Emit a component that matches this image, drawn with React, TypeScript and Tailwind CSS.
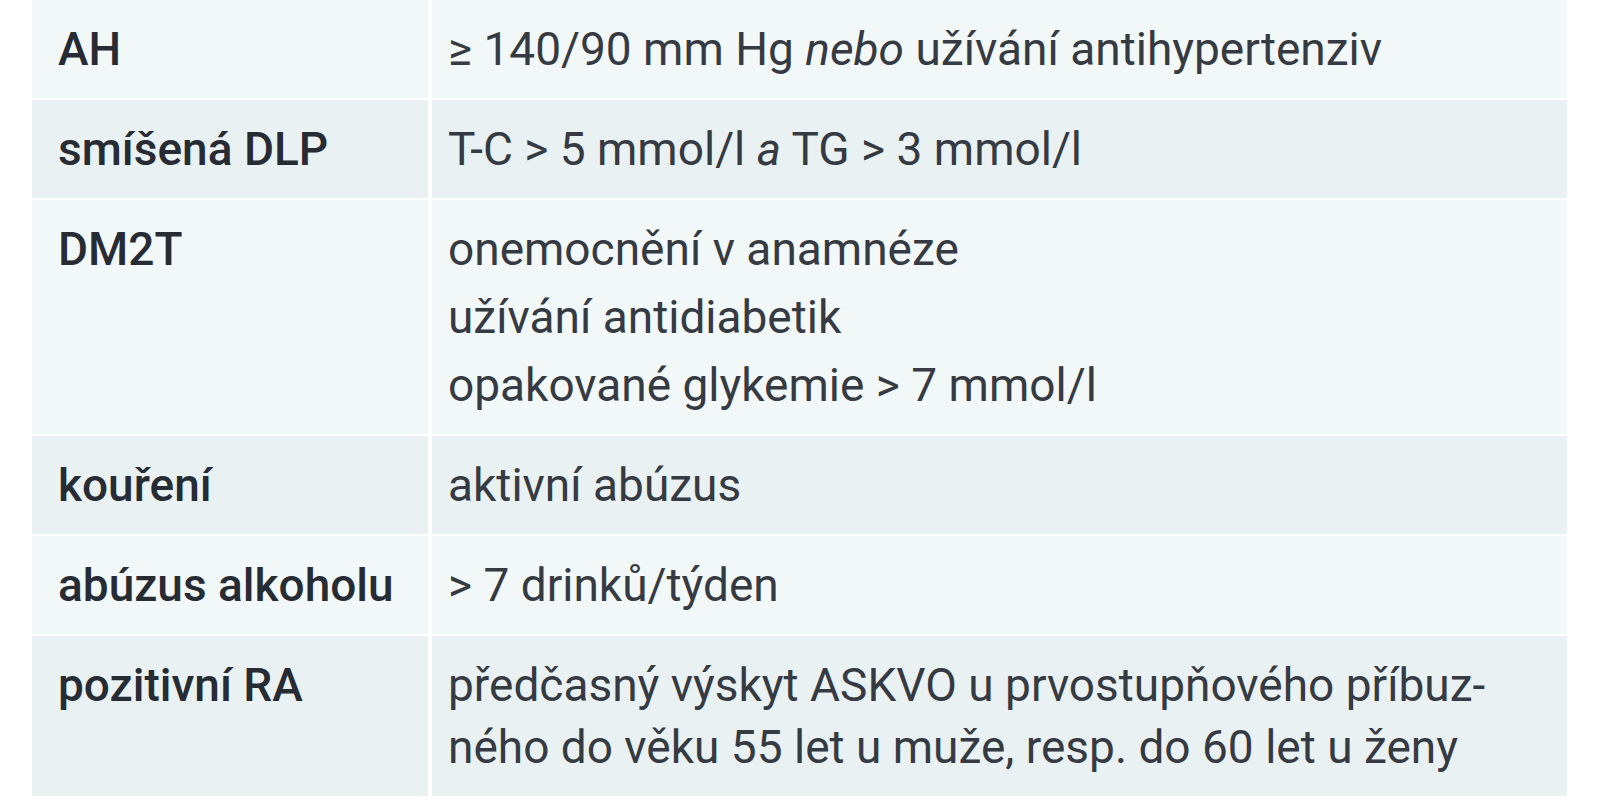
import React from "react";

type Row = {
  label: string;
  lines: React.ReactNode[];
  tight?: boolean;
};

const rows: Row[] = [
  {
    label: "AH",
    lines: [
      <>
        ≥ 140/90 mm Hg <i>nebo</i> užívání antihypertenziv
      </>,
    ],
  },
  {
    label: "smíšená DLP",
    lines: [
      <>
        T-C &gt; 5 mmol/l <i>a</i> TG &gt; 3 mmol/l
      </>,
    ],
  },
  {
    label: "DM2T",
    lines: ["onemocnění v anamnéze", "užívání antidiabetik", "opakované glykemie > 7 mmol/l"],
  },
  { label: "kouření", lines: ["aktivní abúzus"] },
  { label: "abúzus alkoholu", lines: ["> 7 drinků/týden"] },
  {
    label: "pozitivní RA",
    tight: true,
    lines: [
      "předčasný výskyt ASKVO u prvostupňového příbuz-",
      "ného do věku 55 let u muže, resp. do 60 let u ženy",
    ],
  },
];

const App = () => {
  return (
    <div className="min-h-[800px] w-full bg-white pl-8 pr-9 font-['Roboto','Liberation_Sans',sans-serif] text-[46px] text-[#363a42]">
      <div className="flex flex-col gap-[2px]">
        {rows.map((row, i) => (
          <div key={row.label} className="grid grid-cols-[396px_1fr] gap-[4px]">
            <div
              className={`py-[18px] pl-[26px] font-medium leading-[62px] text-[#272b34] ${
                i % 2 === 0 ? "bg-[#f2f7f7]" : "bg-[#e9f1f2]"
              }`}
            >
              {row.label}
            </div>
            <div
              className={`flex flex-col py-[18px] pl-[16px] leading-[62px] ${
                row.tight ? "gap-0" : "gap-[6px]"
              } ${i % 2 === 0 ? "bg-[#f2f7f7]" : "bg-[#e9f1f2]"}`}
            >
              {row.lines.map((line, j) => (
                <div key={j}>{line}</div>
              ))}
            </div>
          </div>
        ))}
      </div>
    </div>
  );
};

export default App;
